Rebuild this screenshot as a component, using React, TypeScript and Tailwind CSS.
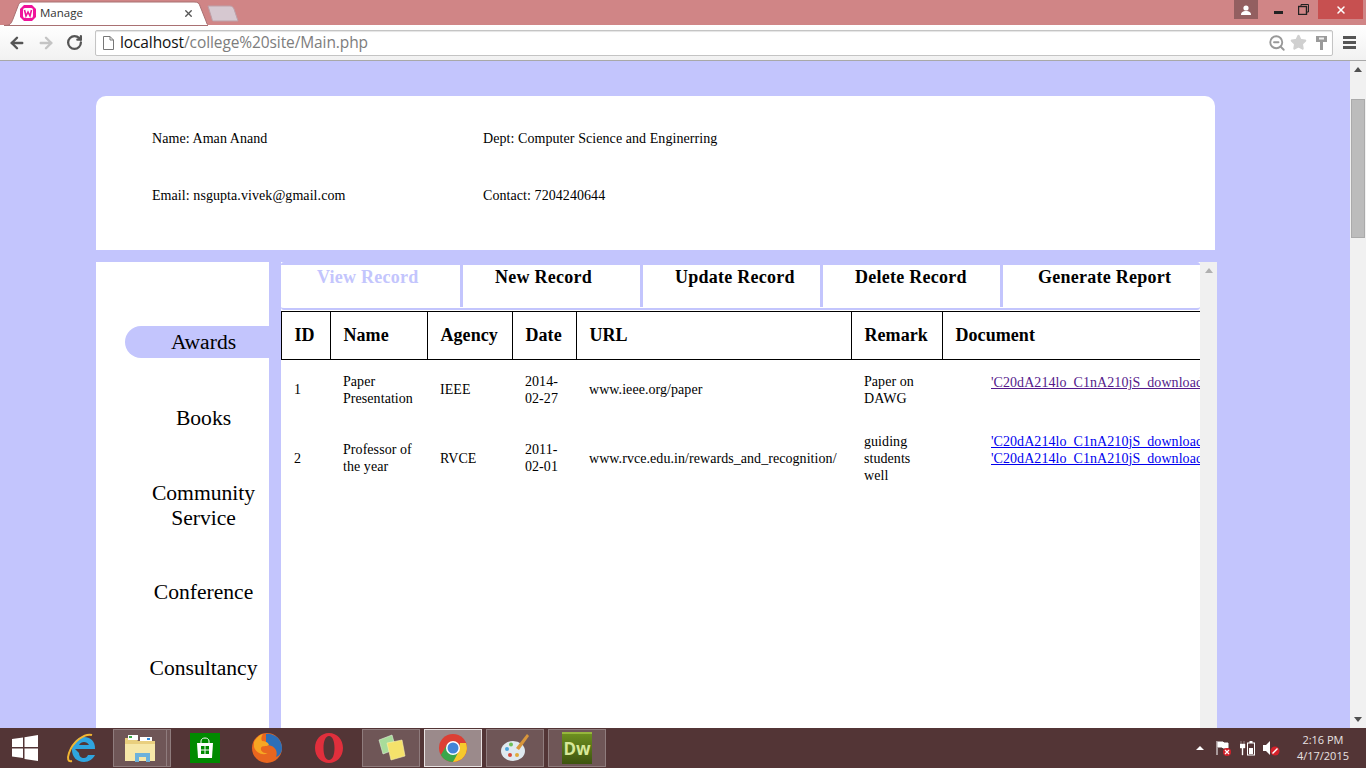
import { ArrowLeft, ArrowRight, RotateCw, Star, ZoomOut, X } from "lucide-react";

const tabs = [
  { label: "View Record", w: "w-[182px]", pl: "pl-[36px]", active: true },
  { label: "New Record", w: "w-[180px]", pl: "pl-[32px]" },
  { label: "Update Record", w: "w-[180px]", pl: "pl-[32px]" },
  { label: "Delete Record", w: "w-[180px]", pl: "pl-[32px]" },
  { label: "Generate Report", w: "flex-1", pl: "pl-[35px]" },
];

const navItems = [
  { label: "Awards", active: true, h: "h-[32px]", mt: "mt-[64px]" },
  { label: "Books", h: "h-[32px]", mt: "mt-[44px]" },
  { label: "Community Service", h: "h-[50px]", mt: "mt-[47px]" },
  { label: "Conference", h: "h-[32px]", mt: "mt-[45px]" },
  { label: "Consultancy", h: "h-[32px]", mt: "mt-[44px]" },
];

const FILE = "'C20dA214lo_C1nA210jS_download.pdf";

function ManageTab() {
  return (
    <div className="relative w-[204px] h-[25px] ml-[4px] mt-[1px] flex items-center pl-[16px] pr-[14px] gap-[4px]">
      <svg className="absolute inset-0" width="204" height="25" viewBox="0 0 204 25">
        <path d="M0 24.5 C6 24.5 7 23 9 18 L14 5 C15 2 16 1 20 1 L190 1 C194 1 195 2 196 5 L202 20 C203 23 203 24 206 24.5 Z" fill="#fff" stroke="#a97072" />
      </svg>
      <svg className="relative -mt-[1px]" width="16" height="16" viewBox="0 0 16 16">
        <path d="M4 0h8l4 4v8l-4 4H4l-4-4V4z" fill="#f0139b" />
        <rect x="3" y="3" width="10" height="10" rx="2" fill="#fff" />
        <path d="M4.500 5l1.500 6 2-4 2 4 1.500-6" stroke="#f0139b" strokeWidth="1.600" fill="none" />
      </svg>
      <span className="relative -mt-[2px] text-[11.5px] text-[#333] flex-1 [font-family:'Open_Sans',sans-serif]">Manage</span>
      <X className="relative text-[#555]" size={11} strokeWidth={3} />
    </div>
  );
}

function BrowserChrome() {
  return (
    <>
      <div className="h-[25px] bg-[#d08586] flex items-start relative shrink-0">
        <ManageTab />
        <svg className="mt-[5px] -ml-[1px]" width="34" height="17" viewBox="0 0 34 17">
          <path d="M1 1h22c2 0 3 1 4 3l4 12H7c-1 0-2 0-2-2z" fill="#d6c8d0" stroke="#bda0a8" />
        </svg>
        <div className="ml-auto flex items-start pr-[3px]">
          <div className="w-[24px] h-[19px] bg-[#935f60] flex items-center justify-center">
            <svg width="12" height="10" viewBox="0 0 12 10"><circle cx="6" cy="3" r="2.600" fill="#fff" /><path d="M1 10c0-3 2-4 5-4s5 1 5 4z" fill="#fff" /></svg>
          </div>
          <div className="w-[60px] h-[19px] flex items-center pl-[16px] gap-[15px]">
            <span className="w-[9px] h-[3px] bg-[#222] mt-[5px]" />
            <svg width="11" height="11" viewBox="0 0 11 11"><path d="M3 2.500V.500h7.500V8H8.500" fill="none" stroke="#222" /><rect x=".5" y="2.500" width="8" height="8" fill="none" stroke="#222" strokeWidth="1.400" /></svg>
          </div>
          <div className="w-[45px] h-[19px] bg-[#c75050] flex items-center justify-center">
            <X className="text-white" size={12} strokeWidth={3} />
          </div>
        </div>
      </div>
      <div className="h-[36px] shrink-0 bg-gradient-to-b from-white to-[#f1f1f1] border-b border-[#a8a8a8] flex items-center">
        <div className="w-[95px] flex items-center pl-[8px] gap-[11px]">
          <ArrowLeft className="text-[#555]" size={18} strokeWidth={3.200} />
          <ArrowRight className="text-[#c4c4c4]" size={18} strokeWidth={3.200} />
          <RotateCw className="text-[#555]" size={17} strokeWidth={3.200} />
        </div>
        <div className="w-[1238px] h-[26px] bg-white border border-[#c4c4c4] rounded-[2px] flex items-center pl-[7px] pr-[5px] shadow-[inset_0_1px_1px_#e4e4e4]">
          <svg className="mr-[6px]" width="11" height="14" viewBox="0 0 11 14"><path d="M.5.500h6.500l3.500 3.500v9.500H.5zM7 .5V4h3.500" fill="#fff" stroke="#777" /></svg>
          <span className="text-[15.5px] text-[#7d7d7d] [font-family:'Open_Sans',sans-serif] tracking-[-0.1px]"><span className="text-[#111]">localhost</span>/college%20site/Main.php</span>
          <div className="ml-auto flex items-center">
            <ZoomOut className="text-[#999]" size={18} strokeWidth={2.500} />
            <Star className="text-[#d0d0d0] ml-[4px]" size={17} fill="#d0d0d0" />
            <svg className="ml-[9px]" width="11" height="16" viewBox="0 0 11 16"><path d="M0 1h11v6H7v8H4V7H0z" fill="#9a9a9a" /><rect x="3" y="2.500" width="5" height="2" fill="#eee" /></svg>
          </div>
        </div>
        <div className="flex-1 flex flex-col items-center gap-[2px]">
          <span className="w-[13px] h-[3px] bg-[#555]" />
          <span className="w-[13px] h-[3px] bg-[#555]" />
          <span className="w-[13px] h-[3px] bg-[#555]" />
        </div>
      </div>
    </>
  );
}

function InfoCard() {
  return (
    <div className="h-[154px] bg-white rounded-t-[10px] pl-[56px] pt-[34px] text-[14px] tracking-[0.07px] text-black">
      <div className="flex h-[17px] items-center">
        <span className="w-[331px]">Name: Aman Anand</span>
        <span>Dept: Computer Science and Enginerring</span>
      </div>
      <div className="flex h-[17px] items-center mt-[40px]">
        <span className="w-[331px]">Email: nsgupta.vivek@gmail.com</span>
        <span>Contact: 7204240644</span>
      </div>
    </div>
  );
}

function Sidebar() {
  return (
    <div className="w-[173px] shrink-0 bg-white h-full flex flex-col items-stretch">
      {navItems.map((n) => (
        <div
          key={n.label}
          className={`${n.mt} ${n.h} ml-[29px] pl-[13px] flex items-center justify-center text-center text-[21.6px] leading-[25px] text-black ${n.active ? "bg-[#c3c5fd] rounded-l-full" : ""}`}
        >
          <span className={n.label === "Community Service" ? "w-[120px]" : ""}>{n.label}</span>
        </div>
      ))}
    </div>
  );
}

function DocLink({ visited }: { visited?: boolean }) {
  return <a className={`block underline whitespace-nowrap ${visited ? "text-[#551a8b]" : "text-[#0000ee]"}`}>{FILE}</a>;
}

const th = "border-y border-r border-black pl-[12.5px] pr-0 text-left text-[18px] font-bold";
const td = "pl-[12.5px] pr-[12px] py-0 align-middle";

function RecordTable() {
  return (
    <div className="overflow-hidden mt-[1px]">
      <table className="table-fixed border-collapse w-[919px] text-[14px] leading-[17px] tracking-[0.06px] text-black">
        <colgroup>
          <col className="w-[49px]" />
          <col className="w-[97px]" />
          <col className="w-[85px]" />
          <col className="w-[64px]" />
          <col className="w-[275px]" />
          <col className="w-[91px]" />
          <col className="w-[258px]" />
        </colgroup>
        <thead>
          <tr className="h-[48px]">
            {["ID", "Name", "Agency", "Date", "URL", "Remark"].map((h, i) => (
              <th key={h} className={`${th} ${i === 0 ? "border-l" : ""}`}>{h}</th>
            ))}
            <th className="border-y border-black pl-[12.5px] text-left text-[18px] font-bold">Document</th>
          </tr>
        </thead>
        <tbody>
          <tr className="h-[60px]">
            <td className={td}>1</td>
            <td className={td}>Paper Presentation</td>
            <td className={td}>IEEE</td>
            <td className={td}>2014-02-27</td>
            <td className={td}>www.ieee.org/paper</td>
            <td className={td}>Paper on DAWG</td>
            <td className="align-top pt-[14px] pl-[48.5px]"><DocLink visited /></td>
          </tr>
          <tr className="h-[77px]">
            <td className={td}>2</td>
            <td className={td}>Professor of the year</td>
            <td className={td}>RVCE</td>
            <td className={td}>2011-02-01</td>
            <td className={`${td} whitespace-nowrap`}>www.rvce.edu.in/rewards_and_recognition/</td>
            <td className={td}>guiding students well</td>
            <td className="align-top pt-[13px] pl-[48.5px]"><DocLink /><DocLink /></td>
          </tr>
        </tbody>
      </table>
    </div>
  );
}

function MainPanel() {
  return (
    <div className="w-[936px] ml-[12px] h-full flex">
      <div className="w-[919px] h-full bg-white overflow-hidden">
        <div className="h-[48px] flex border-t-[3px] border-b-2 border-[#c3c5fd] rounded-[3px] pb-[1px]">
          {tabs.map((t, i) => (
            <div
              key={t.label}
              className={`${t.w} ${t.pl} text-[18px] font-bold leading-[24px] tracking-[0.25px] ${i < 4 ? "border-r-[3px] border-[#c3c5fd]" : ""} ${t.active ? "text-[#c3c5fd]" : "text-black"}`}
            >
              {t.label}
            </div>
          ))}
        </div>
        <RecordTable />
      </div>
      <div className="w-[17px] h-full bg-[#f0f0f0] flex justify-center pt-[6px]">
        <span className="w-0 h-0 border-x-[4px] border-x-transparent border-b-[5px] border-b-[#b0b0b0]" />
      </div>
    </div>
  );
}

function PageScrollbar() {
  return (
    <div className="w-[16px] shrink-0 h-full bg-[#f1f1f1] flex flex-col items-center">
      <span className="mt-[6px] w-0 h-0 border-x-[4px] border-x-transparent border-b-[5px] border-b-[#505050]" />
      <div className="mt-[27px] w-[14px] h-[139px] bg-[#bcbcbc] border border-[#aaa]" />
      <span className="mt-auto mb-[6px] w-0 h-0 border-x-[4px] border-x-transparent border-t-[5px] border-t-[#505050]" />
    </div>
  );
}

function TaskButton({ children, pressed }: { children: React.ReactNode; pressed?: boolean }) {
  return (
    <div className={`w-[58px] h-[38px] flex items-center justify-center border ${pressed ? "bg-[#9b8a8b] border-[#e8e2e2]" : "bg-[#6f5657] border-[#8f7c7d]"}`}>
      {children}
    </div>
  );
}

function Taskbar() {
  return (
    <div className="h-[40px] shrink-0 bg-[#533536] flex items-center relative">
      <div className="w-[50px] flex justify-center">
        <svg width="26" height="26" viewBox="0 0 26 26"><path d="M0 4l11-1.500V12H0zM12.500 2.200L26 0v12H12.500zM0 13.500h11V23L0 21.500zM12.500 13.500H26V26l-13.500-2z" fill="#fff" /></svg>
      </div>
      <div className="w-[63px] flex justify-center">
        <svg width="34" height="34" viewBox="0 0 34 34">
          <path d="M10 18h20c.500-8-5-12-11-12-7 0-12 6-12 13s5 12 12 12c5 0 9-3 11-7h-7c-1 2-2 3-4 3-3 0-5-2-5-5z M14 14c1-2 3-3 5-3s4 1 5 3z" fill="#2fa5e0" fillRule="evenodd" />
          <path d="M27 4C20 2 8 10 4 22c-2 6-1 9 3 8" fill="none" stroke="#f2b632" strokeWidth="2" />
        </svg>
      </div>
      <div className="flex items-center">
        <div className="w-[54px] h-[38px] bg-[#6f5657] border border-[#8f7c7d] flex items-center justify-center">
          <svg width="32" height="30" viewBox="0 0 32 30">
            <path d="M1 5h11l2 3h17v20H1z" fill="#e9cf7e" />
            <rect x="4" y="2" width="10" height="5" fill="#fff" /><rect x="5" y="3" width="3" height="2" fill="#35a745" />
            <rect x="16" y="4" width="12" height="4" fill="#fff" /><rect x="23" y="5" width="3" height="2" fill="#2e8ad8" />
            <rect x="1" y="11" width="30" height="17" fill="#f6e7a8" />
            <path d="M11 29v-9h15v9h-4v-5h-7v5z" fill="#6cb2dc" />
          </svg>
        </div>
        <div className="w-[4px] h-[38px] bg-[#6f5657] border-y border-r border-[#8f7c7d]" />
      </div>
      <div className="w-[80px] flex justify-center -ml-[6px]">
        <div className="w-[30px] h-[30px] bg-[#008a00] flex items-center justify-center">
          <svg width="18" height="22" viewBox="0 0 18 22">
            <path d="M5 7V4c0-4 8-4 8 0v3" fill="none" stroke="#fff" />
            <path d="M1 6h16l-1 15H2z" fill="#fff" />
            <path d="M5 9h3.500v3.500H5zM9.500 9H13v3.500H9.500zM5 13.500h3.500V17H5zM9.500 13.500H13V17H9.500z" fill="#008a00" />
          </svg>
        </div>
      </div>
      <div className="w-[55px] flex justify-start pl-[9px] -ml-[3px]">
        <svg width="32" height="32" viewBox="0 0 32 32">
          <circle cx="16" cy="16" r="15" fill="#e8661f" />
          <path d="M15 2a14 14 0 0 1 16 14c0 5-3 8-6 9 2-5 0-12-10-12z" fill="#2c6fb8" />
          <path d="M3 10c2-4 5-7 9-8-2 3-2 5-1 7 3 0 6 1 7 4-3 2-7 0-8 3s3 6 7 5c-5 3-12 0-14-6z" fill="#f6a623" />
        </svg>
      </div>
      <div className="w-[63px] flex justify-center">
        <svg width="30" height="32" viewBox="0 0 30 32">
          <path fillRule="evenodd" d="M15 1c8 0 14 6.500 14 15s-6 15-14 15S1 24.500 1 16 7 1 15 1zm0 3c-3.500 0-5.500 5-5.500 12s2 12 5.500 12 5.500-5 5.500-12S18.500 4 15 4z" fill="#e02f3c" />
        </svg>
      </div>
      <div className="flex gap-[4px] ml-[2px]">
        <TaskButton>
          <svg width="34" height="32" viewBox="0 0 34 32">
            <path d="M5 8l13-5 4 14-13 5z" fill="#a8dc9a" stroke="#e0f0dc" strokeWidth=".600" />
            <path d="M13 11l15-3 3 16-14 4z" fill="#f5e26b" stroke="#f8f0b0" strokeWidth=".600" />
          </svg>
        </TaskButton>
        <TaskButton pressed>
          <svg width="30" height="30" viewBox="0 0 30 30">
            <circle cx="15" cy="15" r="14" fill="#dc3f34" />
            <path d="M15 29A14 14 0 0 1 2.900 22L9 11.500 21 22z" fill="#3aa64a" />
            <path d="M28 10A14 14 0 0 1 15 29l6-11 1-8z" fill="#f6c92c" />
            <circle cx="15" cy="15" r="7" fill="#fff" />
            <circle cx="15" cy="15" r="5.500" fill="#4285d8" />
          </svg>
        </TaskButton>
        <TaskButton>
          <svg width="32" height="32" viewBox="0 0 32 32">
            <ellipse cx="14" cy="19" rx="12" ry="10" fill="#dfe9ef" />
            <circle cx="8" cy="17" r="2" fill="#4ba3dc" /><circle cx="12" cy="12.500" r="2" fill="#6cbf56" /><circle cx="11" cy="23" r="2" fill="#d84a3c" /><circle cx="18" cy="23" r="2" fill="#e0aa3c" />
            <path d="M28 2l2 2-10 14-3-2z" fill="#d9963a" />
          </svg>
        </TaskButton>
        <TaskButton>
          <div className="w-[30px] h-[32px] bg-gradient-to-b from-[#6d8f1f] to-[#3e5410] border-t-2 border-[#96b63c] flex items-center justify-center">
            <span className="text-[#d8e89a] text-[17px] font-bold [font-family:'Open_Sans',sans-serif]">Dw</span>
          </div>
        </TaskButton>
      </div>
      <div className="ml-auto flex items-center pr-[17px]">
        <span className="w-0 h-0 border-x-[4px] border-x-transparent border-b-[4px] border-b-white mr-[12px]" />
        <svg className="mr-[8px]" width="16" height="16" viewBox="0 0 16 16">
          <path d="M1 1v14M2 2h5l1 1h4v5H7L6 7H2z" stroke="#fff" fill="#fff" />
          <circle cx="11" cy="12" r="4" fill="#d4212a" />
          <path d="M9 10l4 4M13 10l-4 4" stroke="#fff" strokeWidth="1.200" />
        </svg>
        <svg className="mr-[7px]" width="16" height="16" viewBox="0 0 16 16">
          <path d="M1 1v3M4 1v3M0 4h5v4H3v7H2V8H0z" fill="#fff" stroke="#fff" strokeWidth=".400" />
          <rect x="7.500" y="3" width="7" height="12" fill="none" stroke="#fff" />
          <rect x="9" y="8" width="4" height="6" fill="#fff" /><rect x="9.500" y="1" width="3" height="2" fill="#fff" />
        </svg>
        <svg className="mr-[17px]" width="17" height="16" viewBox="0 0 17 16">
          <path d="M0 5h3l4-4v14l-4-4H0z" fill="#fff" />
          <circle cx="12" cy="11" r="4.500" fill="#d4212a" />
          <path d="M9.500 13.500l5-5" stroke="#fff" strokeWidth="1.500" />
        </svg>
        <div className="text-center text-[11px] leading-[16px] text-[#e8e2e2] [font-family:'Open_Sans',sans-serif]">
          <div>2:16 PM</div>
          <div>4/17/2015</div>
        </div>
      </div>
    </div>
  );
}

export default function App() {
  return (
    <div className="w-[1366px] h-[768px] overflow-hidden flex flex-col [font-family:'Liberation_Serif',serif]">
      <BrowserChrome />
      <div className="h-[667px] flex bg-[#c3c5fd] overflow-hidden">
        <div className="w-[1350px] pl-[96px] pt-[35px] h-full">
          <div className="w-[1119px]">
            <InfoCard />
          </div>
          <div className="mt-[12px] h-[466px] flex">
            <Sidebar />
            <MainPanel />
          </div>
        </div>
        <PageScrollbar />
      </div>
      <Taskbar />
    </div>
  );
}
